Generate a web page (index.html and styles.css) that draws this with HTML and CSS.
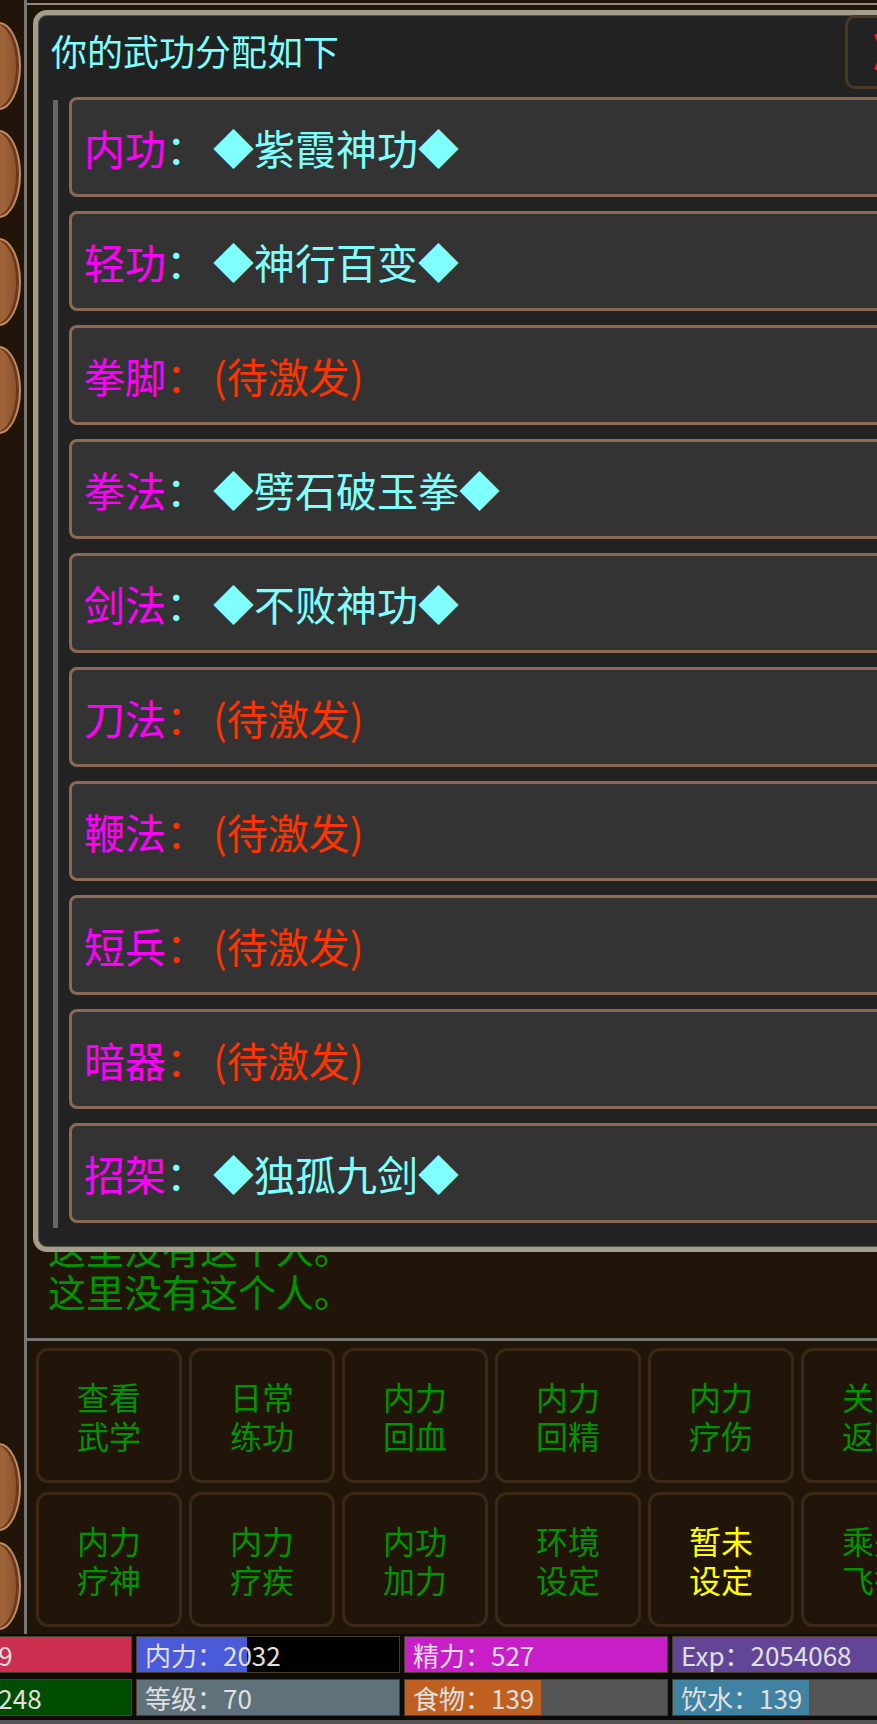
FILE: index.html
```html
<!DOCTYPE html>
<html lang="zh-CN">
<head>
    <meta charset="UTF-8">
    <meta name="viewport" content="width=device-width, initial-scale=1.0">
    <title>武功分配</title>
    <link rel="stylesheet" href="styles.css">
</head>
<body>
    <div class="screen">
        <div class="top">
            <aside class="side">
                <div class="wood"></div>
                <div class="wood"></div>
                <div class="wood"></div>
                <div class="wood"></div>
                <div class="side-bottom">
                    <div class="wood"></div>
                    <div class="wood"></div>
                </div>
            </aside>

            <main class="main">
                <div class="log">
                    <p>这里没有这个人。</p>
                    <p>这里没有这个人。</p>
                </div>

                <div class="actions">
                    <div class="act"><span>查看</span><span>武学</span></div>
                    <div class="act"><span>日常</span><span>练功</span></div>
                    <div class="act"><span>内力</span><span>回血</span></div>
                    <div class="act"><span>内力</span><span>回精</span></div>
                    <div class="act"><span>内力</span><span>疗伤</span></div>
                    <div class="act"><span>关闭</span><span>返回</span></div>
                    <div class="act"><span>内力</span><span>疗神</span></div>
                    <div class="act"><span>内力</span><span>疗疾</span></div>
                    <div class="act"><span>内功</span><span>加力</span></div>
                    <div class="act"><span>环境</span><span>设定</span></div>
                    <div class="act act-off"><span>暂未</span><span>设定</span></div>
                    <div class="act"><span>乘舟</span><span>飞行</span></div>
                </div>
            </main>
        </div>

        <div class="status">
            <div class="bar"><div class="fill hp" style="width:100%"></div><span>气血：1889</span></div>
            <div class="bar bar-empty"><div class="fill mp" style="width:42%"></div><span>内力：2032</span></div>
            <div class="bar"><div class="fill jing" style="width:100%"></div><span>精力：527</span></div>
            <div class="bar"><div class="fill exp" style="width:100%"></div><span>Exp：2054068</span></div>
            <div class="bar"><div class="fill pot" style="width:100%"></div><span>潜能：135248</span></div>
            <div class="bar"><div class="fill lvl" style="width:100%"></div><span>等级：70</span></div>
            <div class="bar"><div class="fill food" style="width:52%"></div><span>食物：139</span></div>
            <div class="bar"><div class="fill water" style="width:52%"></div><span>饮水：139</span></div>
        </div>

        <!-- 武功分配弹窗 -->
        <div class="dialog">
            <div class="dialog-head">
                <h1>你的武功分配如下</h1>
                <div class="close">
                    <svg width="22" height="40" viewBox="0 0 22 40">
                        <path d="M2 2 L20 38 M20 2 L2 38" stroke="#ff1010" stroke-width="5" fill="none"/>
                    </svg>
                </div>
            </div>
            <div class="dialog-body">
                <div class="scrollbar"></div>
                <div class="skills">
                    <div class="skill"><span class="kind">内功</span><span class="val">：</span><span class="val gap">◆紫霞神功◆</span></div>
                    <div class="skill"><span class="kind">轻功</span><span class="val">：</span><span class="val gap">◆神行百变◆</span></div>
                    <div class="skill"><span class="kind">拳脚</span><span class="none">：</span><span class="none gap">(待激发)</span></div>
                    <div class="skill"><span class="kind">拳法</span><span class="val">：</span><span class="val gap">◆劈石破玉拳◆</span></div>
                    <div class="skill"><span class="kind">剑法</span><span class="val">：</span><span class="val gap">◆不败神功◆</span></div>
                    <div class="skill"><span class="kind">刀法</span><span class="none">：</span><span class="none gap">(待激发)</span></div>
                    <div class="skill"><span class="kind">鞭法</span><span class="none">：</span><span class="none gap">(待激发)</span></div>
                    <div class="skill"><span class="kind">短兵</span><span class="none">：</span><span class="none gap">(待激发)</span></div>
                    <div class="skill"><span class="kind">暗器</span><span class="none">：</span><span class="none gap">(待激发)</span></div>
                    <div class="skill"><span class="kind">招架</span><span class="val">：</span><span class="val gap">◆独孤九剑◆</span></div>
                </div>
            </div>
        </div>
    </div>
</body>
</html>
```

FILE: styles.css
```css
body {
    margin: 0;
    background-color: #201508;
    font-family: "Noto Sans CJK SC", "Noto Sans", sans-serif;
}
.screen {
    position: relative;
    width: 877px;
    height: 1724px;
    overflow: hidden;
    background-color: #201508;
}
.top {
    display: flex;
    height: 1634px;
}
.side {
    width: 27px;
    border-right: 3px solid #777;
    display: flex;
    flex-direction: column;
    gap: 20px;
    padding: 22px 0 4px;
    box-sizing: border-box;
}
.side-bottom {
    margin-top: auto;
    display: flex;
    flex-direction: column;
    gap: 11px;
}
.wood {
    width: 40px;
    height: 84px;
    margin-left: -23px;
    border: 2px solid #c48a5c;
    border-radius: 50%;
    background: linear-gradient(90deg, #7a4325, #a0643a 60%, #8a4f2c);
    box-shadow: inset -3px 0 0 #6a3a1e;
    flex-shrink: 0;
}
.main {
    flex: 1;
    display: flex;
    flex-direction: column;
    margin-top: 3px;
    border-top: 2px solid #8f8b7e;
    min-width: 0;
}
.log {
    flex: 1;
    display: flex;
    flex-direction: column;
    justify-content: flex-end;
    padding: 0 0 26px 21px;
}
.log p {
    margin: 0;
    font-size: 38px;
    line-height: 43px;
    color: #009400;
    white-space: nowrap;
}
.actions {
    border-top: 3px solid #777;
    padding: 7px 0 7px 9px;
    display: grid;
    grid-template-columns: repeat(6, 146px);
    grid-auto-rows: 135px;
    gap: 9px 7px;
}
.act {
    border: 3px solid #3d2818;
    border-radius: 12px;
    display: flex;
    flex-direction: column;
    align-items: center;
    justify-content: center;
    text-align: center;
    font-size: 32px;
    line-height: 39px;
    color: #009400;
    white-space: nowrap;
}
.act-off {
    color: #ffff00;
}
.status {
    display: grid;
    grid-template-columns: repeat(4, 262px);
    gap: 8px 6px;
    margin-left: -131px;
    padding: 3px 0 5px;
    background-color: #0d0b07;
    border-bottom: 4px solid #555;
    width: 1066px;
}
.bar {
    position: relative;
    height: 35px;
    background-color: #555;
    outline: 1px solid #4a3e2a;
}
.bar-empty {
    background-color: #000;
}
.fill {
    position: absolute;
    top: 0;
    left: 0;
    bottom: 0;
}
.hp { background-color: #cc2e50; }
.mp { background-color: #4a5ad8; }
.jing { background-color: #c81ec8; }
.exp { background-color: #634597; }
.pot { background-color: #004d00; }
.lvl { background-color: #5f717a; }
.food { background-color: #c06020; }
.water { background-color: #4082a2; }
.bar span {
    position: relative;
    display: block;
    padding-left: 8px;
    font-size: 26px;
    line-height: 35px;
    color: #e0e0e0;
    white-space: nowrap;
}
.dialog {
    position: absolute;
    left: 33px;
    top: 10px;
    width: 900px;
    height: 1242px;
    box-sizing: border-box;
    border: 5px solid #a39d8b;
    border-radius: 14px;
    background-color: #222;
    box-shadow: inset 0 0 0 1px #55534b;
}
.dialog-head {
    display: flex;
    justify-content: space-between;
    align-items: flex-start;
    height: 82px;
}
.dialog-head h1 {
    margin: 0;
    padding-left: 13px;
    font-size: 36px;
    font-weight: normal;
    line-height: 70px;
    color: #80ffff;
    white-space: nowrap;
}
.close {
    width: 80px;
    height: 74px;
    margin-right: 3px;
    box-sizing: border-box;
    border: 3px solid #4a3828;
    border-radius: 10px;
    display: flex;
    align-items: center;
    justify-content: center;
}
.dialog-body {
    display: flex;
    padding-left: 15px;
}
.scrollbar {
    width: 5px;
    height: 1128px;
    margin-top: 3px;
    background-color: #666;
    flex-shrink: 0;
}
.skills {
    flex: 1;
    display: flex;
    flex-direction: column;
    gap: 14px;
    margin-left: 11px;
}
.skill {
    height: 100px;
    box-sizing: border-box;
    border: 3px solid #8a6a55;
    border-radius: 8px;
    background-color: #333;
    display: flex;
    align-items: center;
    padding-left: 12px;
    font-size: 41px;
    white-space: nowrap;
}
.kind {
    color: #ff00ff;
}
.val {
    color: #80ffff;
}
.none {
    color: #ff3300;
}
.gap {
    margin-left: 6px;
}
```
